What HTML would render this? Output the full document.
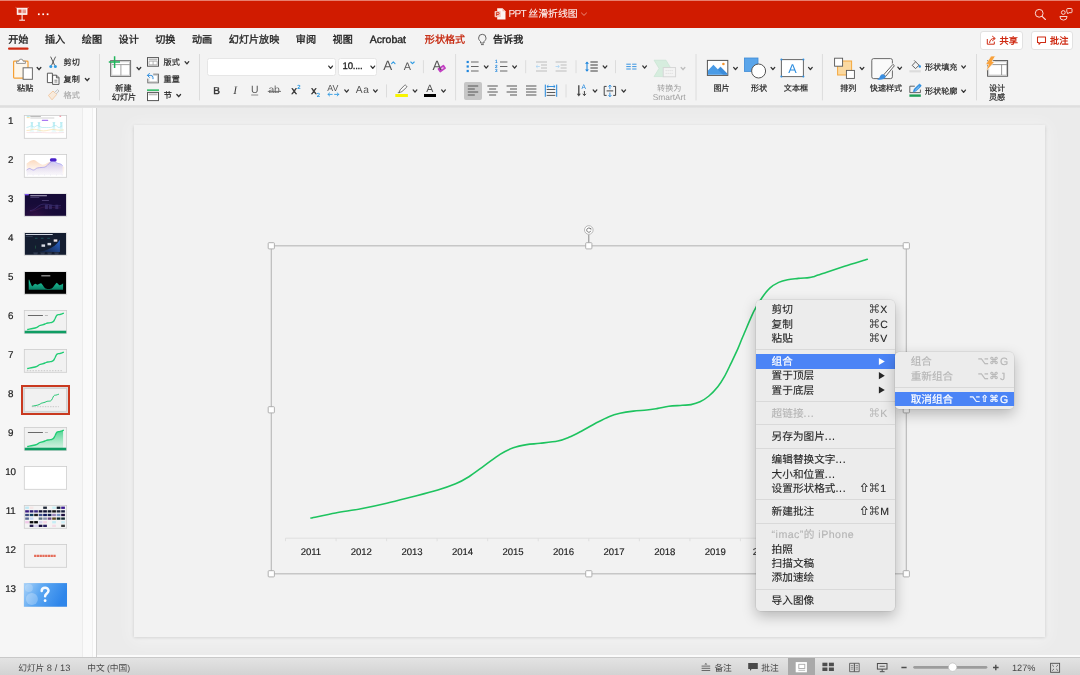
<!DOCTYPE html>
<html lang="zh-CN"><head><meta charset="utf-8"><title>PPT 丝滑折线图</title>
<style>
html,body{margin:0;padding:0;}
html{width:1080px;height:675px;overflow:hidden;background:#ebebeb;}
body{width:1080px;height:675px;overflow:hidden;position:relative;background:#ebebeb;font-family:"Liberation Sans", sans-serif;text-rendering:geometricPrecision;}
.t{position:absolute;white-space:nowrap;font-family:"Liberation Sans", sans-serif;}
.a{position:absolute;}
svg{position:absolute;left:0;top:0;overflow:visible;}
</style></head><body>
<div class="a" style="left:0;top:0;width:1080px;height:675px;overflow:hidden;">
<div class="a" style="left:0;top:0;width:1080px;height:28px;background:#d01b00;"></div>
<div class="a" style="left:0;top:0;width:1080px;height:1px;background:#e77f6f;"></div>
<div class="a" style="left:0;top:28px;width:1080px;height:77px;background:#f3f3f3;"></div>
<div class="a" style="left:0;top:104.5px;width:1080px;height:3px;background:linear-gradient(#e4e4e4,#dedede 50%,#e6e6e6);"></div>
<div class="a" style="left:0;top:107.5px;width:82px;height:550px;background:#f6f6f6;"></div>
<div class="a" style="left:82px;top:107.5px;width:14px;height:550px;background:#fafafa;border-left:1px solid #ececec;box-sizing:border-box;"></div>
<div class="a" style="left:92px;top:107.5px;width:4px;height:550px;background:#fdfdfd;border-left:1px solid #efefef;box-sizing:border-box;"></div>
<div class="a" style="left:96px;top:107.5px;width:1px;height:550px;background:#d0d0d0;"></div>
<div class="a" style="left:97px;top:107.5px;width:983px;height:548px;background:#ebebeb;"></div>
<div class="a" style="left:134px;top:124.5px;width:910.5px;height:512.5px;background:#f2f2f2;box-shadow:0 0.5px 3.5px rgba(0,0,0,0.17),0 2px 16px 3px rgba(255,255,255,0.42);"></div>
<div class="a" style="left:97px;top:655px;width:983px;height:2px;background:#fbfbfb;"></div>
<div class="a" style="left:0;top:657px;width:1080px;height:18px;background:linear-gradient(#e3e3e3,#d3d3d3);border-top:1px solid #c9c9c9;box-sizing:border-box;"></div>
<div class="a" style="left:980.4px;top:31px;width:42.3px;height:18.5px;background:#fff;border:1px solid #e2e2e2;border-radius:3px;box-sizing:border-box;"></div>
<div class="a" style="left:1030.6px;top:31px;width:42.2px;height:18.5px;background:#fff;border:1px solid #e2e2e2;border-radius:3px;box-sizing:border-box;"></div>
<div class="a" style="left:207px;top:58.2px;width:128.6px;height:17.9px;background:#fff;border:1px solid #e6e6e6;border-radius:2.5px;box-sizing:border-box;"></div>
<div class="a" style="left:338.2px;top:58.2px;width:39.3px;height:17.9px;background:#fff;border:1px solid #e6e6e6;border-radius:2.5px;box-sizing:border-box;"></div>
<div class="a" style="left:463.8px;top:81.8px;width:18.4px;height:17.9px;background:#c6c6c6;border-radius:2px;"></div>
<div class="a" style="left:21.1px;top:385.10px;width:48.8px;height:29.60px;background:#dcdcdc;border:2px solid #c9391f;box-sizing:border-box;"></div>
<div class="a" style="left:787.5px;top:658px;width:27.3px;height:17px;background:#a9a9a9;"></div>
<svg width="1080" height="675" viewBox="0 0 1080 675"><g stroke="#fff" fill="none" stroke-width="1"><rect x="17.3" y="8.3" width="9.6" height="6" fill="#fff" fill-opacity="0.85"/><path d="M22.1 14.5V20 M19.2 20.2H25"/><path d="M15.6 7.4L17 8.4 M28.6 7.4L27.2 8.4" stroke-opacity="0.7" stroke-width="0.6"/></g><rect x="18.4" y="9.6" width="3" height="3.2" fill="#d01b00" fill-opacity="0.75"/><path d="M22.6 10.2H26 M22.6 11.4H26 M22.6 12.6H26" stroke="#d01b00" stroke-opacity="0.7" stroke-width="0.6"/>
<rect x="37.949999999999996" y="13.4" width="1.7" height="1.7" fill="#fff"/>
<rect x="42.35" y="13.4" width="1.7" height="1.7" fill="#fff"/>
<rect x="46.75" y="13.4" width="1.7" height="1.7" fill="#fff"/>
<path d="M497.2 8.3h5.3l3 3v8.2h-8.3z" fill="#fff" fill-opacity="0.95"/><path d="M502.5 8.3v3h3z" fill="#f3b5a8"/><rect x="494.6" y="11" width="6.2" height="6.2" rx="0.8" fill="#f6c9c0"/><path d="M496.6 15.9v-3.6h1.5a1.1 1.1 0 0 1 0 2.2h-1.5" stroke="#d01b00" stroke-width="0.8" fill="none"/>
<path d="M581.50 13.00 L584.00 15.40 L586.50 13.00" fill="none" stroke="#ea8b7b" stroke-width="1" stroke-linecap="round" stroke-linejoin="round"/>
<g opacity="0.85"><circle cx="1039.2" cy="13.3" r="3.9" fill="none" stroke="#fff" stroke-width="1"/><path d="M1042.1 16.3L1045.4 19.5" stroke="#fff" stroke-width="1.1" stroke-linecap="round"/></g>
<g fill="none" stroke="#fff" stroke-width="0.95" opacity="0.85"><circle cx="1063.3" cy="12.5" r="1.9"/><path d="M1059.9 16.5h7.2a3.6 3.6 0 0 1 -7.2 0z"/><path d="M1067.6 8.5h3.6a0.8 0.8 0 0 1 0.8 0.8v2.6a0.8 0.8 0 0 1 -0.8 0.8h-2.4l-1 1.1v-1.1h-0.2a0.8 0.8 0 0 1 -0.8-0.8v-2.6a0.8 0.8 0 0 1 0.8-0.8z"/></g>
<rect x="8" y="47.6" width="20.6" height="2.1" rx="1.05" fill="#cf2a12"/>
<g fill="none" stroke="#555" stroke-width="0.9"><path d="M480.6 41.6c-1.6-1.5-2-2.4-2-3.6a3.7 3.7 0 0 1 7.4 0c0 1.2-0.4 2.1-2 3.6v1.4h-3.4z"/><path d="M481 44.6h2.8"/></g>
<g fill="none" stroke="#cf2a12" stroke-width="1" stroke-linejoin="round" stroke-linecap="round"><path d="M987.3 39.4v4.800h7v-2.200"/><path d="M989.6 42.6c0.300-2.800 1.800-4.100 4.600-4.100 M992.500 36.300l2.800 2.200-2.800 2.200"/></g>
<path d="M1037.500 37h8v5.400h-4.800l-1.700 1.900v-1.900h-1.500z" fill="none" stroke="#cf2a12" stroke-width="1.05" stroke-linejoin="round"/>
<path d="M99.5 54V100.4" stroke="#dcdcdc" stroke-width="1"/>
<path d="M199.5 54V100.4" stroke="#dcdcdc" stroke-width="1"/>
<path d="M455.6 54V100.4" stroke="#dcdcdc" stroke-width="1"/>
<path d="M696 54V100.4" stroke="#dcdcdc" stroke-width="1"/>
<path d="M822.4 54V100.4" stroke="#dcdcdc" stroke-width="1"/>
<path d="M976.5 54V100.4" stroke="#dcdcdc" stroke-width="1"/>
<rect x="13.6" y="61.2" width="14.4" height="16.9" rx="0.8" fill="#fdf6ea" stroke="#f5a033" stroke-width="1.2"/><path d="M16.6 63.4v-2.2h2.3a2.1 2.1 0 0 1 4.2 0h2.3v2.2z" fill="#fff" stroke="#8a8a8a" stroke-width="0.9"/><rect x="23.1" y="67.8" width="9.3" height="11.5" fill="#fff" stroke="#6a6a6a" stroke-width="1"/>
<path d="M37.15 67.50 L39.00 69.70 L40.85 67.50" fill="none" stroke="#333" stroke-width="1.3" stroke-linecap="round" stroke-linejoin="round"/>
<g fill="none" stroke="#4a4a4a" stroke-width="0.9" stroke-linecap="round"><path d="M50.8 57L54.6 65.2 M55.4 57L51.6 65.2"/></g><circle cx="50.8" cy="66.5" r="1.5" fill="#2f9be3"/><circle cx="55.4" cy="66.5" r="1.5" fill="#2f9be3"/>
<g fill="#fff" stroke="#4a4a4a" stroke-width="0.9" stroke-linejoin="round"><path d="M47.4 73.2h5v9.4h-5z"/><path d="M52.6 75.2h4l2.4 2.4v6.8h-6.4z"/><path d="M56.4 75.4v2.4h2.4" fill="none"/><path d="M54.4 80.2h3 M54.4 82h3" stroke-width="0.7"/></g>
<path d="M85.35 78.50 L87.20 80.70 L89.05 78.50" fill="none" stroke="#333" stroke-width="1.3" stroke-linecap="round" stroke-linejoin="round"/>
<g opacity="0.55"><path d="M48.4 95.4l4.6-4.4 3.6 3.6-4.6 5.2z" fill="#fde3c8" stroke="#f09a4a" stroke-width="0.8" stroke-linejoin="round"/><path d="M54.6 92.4l3-2.8 1.4 1.4-2.8 3" fill="#eee" stroke="#8a8a8a" stroke-width="0.8"/></g>
<rect x="110.6" y="60.6" width="20" height="15.8" fill="#fff" stroke="#6f6f6f" stroke-width="1"/><rect x="111.7" y="61.7" width="17.8" height="13.6" fill="none" stroke="#c9c9c9" stroke-width="1"/><path d="M112 64.6h18 M120.9 64.6v11" stroke="#9a9a9a" stroke-width="0.9"/><path d="M108.8 62h11.2 M114.6 56.3v11.6" stroke="#21b55c" stroke-width="1.5"/>
<path d="M137.05 67.50 L138.90 69.70 L140.75 67.50" fill="none" stroke="#333" stroke-width="1.3" stroke-linecap="round" stroke-linejoin="round"/>
<rect x="147.5" y="57.6" width="11" height="8.6" fill="#fff" stroke="#555" stroke-width="1"/><rect x="148.6" y="58.7" width="8.8" height="1.6" fill="#bdbdbd"/><path d="M149 61.2h8.2v3.6h-8.2z M153.1 61.2v3.6" fill="none" stroke="#9a9a9a" stroke-width="0.7"/>
<path d="M185.05 61.70 L186.90 63.90 L188.75 61.70" fill="none" stroke="#333" stroke-width="1.3" stroke-linecap="round" stroke-linejoin="round"/>
<rect x="147.8" y="74.2" width="10.6" height="8.6" fill="#fff" stroke="#6a6a6a" stroke-width="1"/><rect x="148.8" y="75.2" width="8.6" height="6.6" fill="none" stroke="#c6c6c6" stroke-width="1"/><rect x="146.6" y="72.6" width="6.6" height="6" fill="#f3f3f3"/><path d="M147.6 75.4h3.2a2.2 2.2 0 0 1 2.2 2.2v1.2 M149.4 73.4l-2 2 2 2" fill="none" stroke="#2f8fe0" stroke-width="1" stroke-linecap="round" stroke-linejoin="round"/>
<rect x="147.5" y="92.4" width="11" height="8.2" fill="#fff" stroke="#555" stroke-width="1"/><rect x="148.6" y="93.5" width="8.8" height="1.8" fill="#bdbdbd"/><rect x="147" y="89.3" width="12" height="1.7" fill="#3dc06f"/>
<path d="M176.85 94.50 L178.70 96.70 L180.55 94.50" fill="none" stroke="#333" stroke-width="1.3" stroke-linecap="round" stroke-linejoin="round"/>
<path d="M328.75 66.10 L330.60 68.30 L332.45 66.10" fill="none" stroke="#333" stroke-width="1.3" stroke-linecap="round" stroke-linejoin="round"/>
<path d="M370.95 66.10 L372.80 68.30 L374.65 66.10" fill="none" stroke="#333" stroke-width="1.3" stroke-linecap="round" stroke-linejoin="round"/>
<path d="M391.6 63.6l1.7-1.7 1.7 1.7" fill="none" stroke="#2f9be3" stroke-width="1.1" stroke-linecap="round" stroke-linejoin="round"/>
<path d="M410.8 62l1.7 1.7 1.7-1.7" fill="none" stroke="#2f9be3" stroke-width="1.1" stroke-linecap="round" stroke-linejoin="round"/>
<path d="M423.4 60.2V73.2" stroke="#dcdcdc" stroke-width="1"/>
<g transform="rotate(-35 441.8 68.6)"><rect x="438" y="66.2" width="7.6" height="4.8" rx="0.8" fill="#c23fc2"/><rect x="441.4" y="67.9" width="2.4" height="1.4" fill="#f0c8f0"/></g>
<path d="M251.2 95h7" stroke="#8a8a8a" stroke-width="1"/>
<path d="M267.8 91.4h13.2" stroke="#555" stroke-width="0.8"/>
<path d="M328 94.4h4.2 M334.6 94.4h4.2 M329.6 92.9l-1.6 1.5 1.6 1.5 M337.2 92.9l1.6 1.5-1.6 1.5" fill="none" stroke="#2f9be3" stroke-width="0.9" stroke-linecap="round" stroke-linejoin="round"/>
<path d="M344.75 89.90 L346.60 92.10 L348.45 89.90" fill="none" stroke="#333" stroke-width="1.3" stroke-linecap="round" stroke-linejoin="round"/>
<path d="M373.55 89.90 L375.40 92.10 L377.25 89.90" fill="none" stroke="#333" stroke-width="1.3" stroke-linecap="round" stroke-linejoin="round"/>
<path d="M386.5 84.4V97.4" stroke="#dcdcdc" stroke-width="1"/>
<path d="M399 92.2l1.2-2.4 4.2-4.4a1 1 0 0 1 1.5 0l0.6 0.6a1 1 0 0 1 0 1.4l-4.6 4.2-1.6 0.6z" fill="#fafafa" stroke="#555" stroke-width="0.8" stroke-linejoin="round"/><path d="M397.4 92.8l2-0.8 0.6 0.6-1 0.6z" fill="#555"/><rect x="395.3" y="94" width="12.6" height="3" fill="#f8f400"/>
<path d="M413.15 89.90 L415.00 92.10 L416.85 89.90" fill="none" stroke="#333" stroke-width="1.3" stroke-linecap="round" stroke-linejoin="round"/>
<rect x="424" y="94" width="12" height="3" fill="#000"/>
<path d="M441.65 89.90 L443.50 92.10 L445.35 89.90" fill="none" stroke="#333" stroke-width="1.3" stroke-linecap="round" stroke-linejoin="round"/>
<rect x="466.6" y="60.9" width="2.2" height="2.2" fill="#1f86dd"/>
<path d="M471 62h7.6" stroke="#9c9c9c" stroke-width="1.6"/>
<rect x="466.6" y="65.4" width="2.2" height="2.2" fill="#1f86dd"/>
<path d="M471 66.5h7.6" stroke="#555" stroke-width="0.9"/>
<rect x="466.6" y="69.9" width="2.2" height="2.2" fill="#1f86dd"/>
<path d="M471 71h7.6" stroke="#9c9c9c" stroke-width="1.6"/>
<path d="M484.35 65.90 L486.20 68.10 L488.05 65.90" fill="none" stroke="#333" stroke-width="1.3" stroke-linecap="round" stroke-linejoin="round"/>
<path d="M500 62h7.4" stroke="#9c9c9c" stroke-width="1.6"/>
<path d="M500 66.5h7.4" stroke="#555" stroke-width="0.9"/>
<path d="M500 71h7.4" stroke="#9c9c9c" stroke-width="1.6"/>
<path d="M512.75 65.90 L514.60 68.10 L516.45 65.90" fill="none" stroke="#333" stroke-width="1.3" stroke-linecap="round" stroke-linejoin="round"/>
<path d="M525.7 60.2V73.2" stroke="#dcdcdc" stroke-width="1"/>
<g stroke="#cfcfcf" stroke-width="1.5"><path d="M536.0 62h11 M541.0 65h6 M541.0 68h6 M536.0 71h11"/></g>
<path d="M539.8000000000001 66.5h-3.6 M537.6 65.1l-1.5 1.4 1.5 1.4" fill="none" stroke="#a9d3f3" stroke-width="0.8"/>
<g stroke="#cfcfcf" stroke-width="1.5"><path d="M555.6 62h11 M560.6 65h6 M560.6 68h6 M555.6 71h11"/></g>
<path d="M555.6 66.5h3.6 M557.8000000000001 65.1l1.5 1.4-1.5 1.4" fill="none" stroke="#a9d3f3" stroke-width="0.8"/>
<path d="M576 60.2V73.2" stroke="#dcdcdc" stroke-width="1"/>
<path d="M587 62.6v8" stroke="#1f86dd" stroke-width="1.1"/><path d="M585 63.8l2-2.4 2 2.4z M585 69.4l2 2.4 2-2.4z" fill="#1f86dd"/>
<path d="M590.4 62h7.4" stroke="#707070" stroke-width="1.4"/>
<path d="M590.4 65h7.4" stroke="#707070" stroke-width="1.4"/>
<path d="M590.4 68h7.4" stroke="#707070" stroke-width="1.4"/>
<path d="M590.4 71h7.4" stroke="#707070" stroke-width="1.4"/>
<path d="M603.15 65.90 L605.00 68.10 L606.85 65.90" fill="none" stroke="#333" stroke-width="1.3" stroke-linecap="round" stroke-linejoin="round"/>
<path d="M615.5 60.2V73.2" stroke="#dcdcdc" stroke-width="1"/>
<path d="M626.3 64.2h4.5 M632.2 64.2h4.3" stroke="#2f8fe0" stroke-width="0.95"/>
<path d="M626.3 66.6h4.5 M632.2 66.6h4.3" stroke="#2f8fe0" stroke-width="0.95"/>
<path d="M626.3 69h4.5 M632.2 69h4.3" stroke="#2f8fe0" stroke-width="0.95"/>
<path d="M642.75 65.90 L644.60 68.10 L646.45 65.90" fill="none" stroke="#333" stroke-width="1.3" stroke-linecap="round" stroke-linejoin="round"/>
<g opacity="0.75"><path d="M654 60.2h12l5 8.2-5 8.2h-12l5-8.2z" fill="#cdebd8" stroke="#b4dcc2" stroke-width="0.6"/><rect x="663.2" y="67.6" width="12.4" height="9.2" fill="#f4f4f4" stroke="#c9c9c9" stroke-width="0.9"/><path d="M665.6 70.6h7.6 M665.6 73.4h7.6" stroke="#d4d4d4" stroke-width="0.9" stroke-dasharray="1.2 0.8"/></g>
<path d="M681.15 67.50 L683.00 69.70 L684.85 67.50" fill="none" stroke="#bdbdbd" stroke-width="1.3" stroke-linecap="round" stroke-linejoin="round"/>
<path d="M467.80 86h10.4" stroke="#7a7a7a" stroke-width="1.5"/>
<path d="M467.80 89h7" stroke="#7a7a7a" stroke-width="1.5"/>
<path d="M467.80 92h10.4" stroke="#7a7a7a" stroke-width="1.5"/>
<path d="M467.80 95h7" stroke="#7a7a7a" stroke-width="1.5"/>
<path d="M487.40 86h10.4" stroke="#8a8a8a" stroke-width="1.5"/>
<path d="M489.10 89h7" stroke="#8a8a8a" stroke-width="1.5"/>
<path d="M487.40 92h10.4" stroke="#8a8a8a" stroke-width="1.5"/>
<path d="M489.10 95h7" stroke="#8a8a8a" stroke-width="1.5"/>
<path d="M506.60 86h10.4" stroke="#8a8a8a" stroke-width="1.5"/>
<path d="M510.00 89h7" stroke="#8a8a8a" stroke-width="1.5"/>
<path d="M506.60 92h10.4" stroke="#8a8a8a" stroke-width="1.5"/>
<path d="M510.00 95h7" stroke="#8a8a8a" stroke-width="1.5"/>
<path d="M526.00 86h10.4" stroke="#8a8a8a" stroke-width="1.5"/>
<path d="M526.00 89h10.4" stroke="#8a8a8a" stroke-width="1.5"/>
<path d="M526.00 92h10.4" stroke="#8a8a8a" stroke-width="1.5"/>
<path d="M526.00 95h10.4" stroke="#8a8a8a" stroke-width="1.5"/>
<path d="M545.3 84.6v12.2 M556.7 84.6v12.2" stroke="#1f86dd" stroke-width="1"/><path d="M547 86.5h8 M548.4 85.2l-1.5 1.3 1.5 1.3 M553.6 85.2l1.5 1.3-1.5 1.3" fill="none" stroke="#1f86dd" stroke-width="0.9" stroke-linejoin="round"/>
<path d="M546.70 89.5h8.6" stroke="#4a4a4a" stroke-width="0.9"/>
<path d="M546.70 92.5h8.6" stroke="#4a4a4a" stroke-width="0.9"/>
<path d="M546.70 95.4h8.6" stroke="#4a4a4a" stroke-width="0.9"/>
<path d="M566 84.4V97.4" stroke="#dcdcdc" stroke-width="1"/>
<path d="M578.8 85.2v9.4" stroke="#444" stroke-width="1.3"/><path d="M576.8 93.8l2 2.8 2-2.8z" fill="#444"/>
<path d="M584.4 91v4.6 M582.8 93.8l1.6 1.8 1.6-1.8" fill="none" stroke="#444" stroke-width="1" stroke-linejoin="round"/>
<path d="M593.15 89.90 L595.00 92.10 L596.85 89.90" fill="none" stroke="#333" stroke-width="1.3" stroke-linecap="round" stroke-linejoin="round"/>
<g fill="none" stroke="#444" stroke-width="1"><path d="M606.6 86.4h-2.4v9h2.4 M613.2 86.4h2.4v9h-2.4"/><path d="M606.6 90.9h6.6"/><path d="M609.9 85.2v4 M608.5 86.6l1.4-1.5 1.4 1.5 M609.9 96.6v-4 M608.5 95.2l1.4 1.5 1.4-1.5" stroke="#1f86dd" stroke-width="0.9"/></g>
<path d="M621.85 89.90 L623.70 92.10 L625.55 89.90" fill="none" stroke="#333" stroke-width="1.3" stroke-linecap="round" stroke-linejoin="round"/>
<rect x="707.4" y="60.4" width="20.4" height="15" fill="#fff" stroke="#555" stroke-width="1"/><path d="M708 74.8v-4.4l5.4-5.6 4.6 4.8 2.6-2.6 6.6 6.6v1.2z" fill="#4a9be6"/><path d="M717.6 69.4l2.8-2.8 6.8 6.8v1.4h-4.2z" fill="#2f7fd0" fill-opacity="0.55"/><circle cx="723.4" cy="64" r="1.3" fill="#f5932c"/>
<path d="M733.65 67.40 L735.50 69.60 L737.35 67.40" fill="none" stroke="#333" stroke-width="1.3" stroke-linecap="round" stroke-linejoin="round"/>
<rect x="744.4" y="58" width="13.6" height="13.4" fill="#5aa5ea" stroke="#3c8ad6" stroke-width="0.8"/><circle cx="758.6" cy="71" r="7" fill="#fff" stroke="#555" stroke-width="1"/>
<path d="M771.05 67.40 L772.90 69.60 L774.75 67.40" fill="none" stroke="#333" stroke-width="1.3" stroke-linecap="round" stroke-linejoin="round"/>
<rect x="781.4" y="59.6" width="22" height="17" fill="#fff" stroke="#666" stroke-width="1"/>
<circle cx="781.4" cy="59.6" r="1" fill="#2f8fe0"/>
<circle cx="803.4" cy="59.6" r="1" fill="#2f8fe0"/>
<circle cx="781.4" cy="76.6" r="1" fill="#2f8fe0"/>
<circle cx="803.4" cy="76.6" r="1" fill="#2f8fe0"/>
<path d="M808.55 67.40 L810.40 69.60 L812.25 67.40" fill="none" stroke="#333" stroke-width="1.3" stroke-linecap="round" stroke-linejoin="round"/>
<rect x="837.6" y="61" width="14" height="14" fill="#fbd9a0" stroke="#f4a83f" stroke-width="1"/><rect x="834.6" y="58.2" width="8" height="8" fill="#fff" stroke="#555" stroke-width="0.9"/><rect x="846.4" y="70.4" width="8" height="8" fill="#fff" stroke="#555" stroke-width="0.9"/>
<path d="M860.15 67.40 L862.00 69.60 L863.85 67.40" fill="none" stroke="#333" stroke-width="1.3" stroke-linecap="round" stroke-linejoin="round"/>
<rect x="871.8" y="58.6" width="20.6" height="20" rx="1.8" fill="#fafafa" stroke="#5a5a5a" stroke-width="0.9"/><path d="M894.6 64.6l-10.400 12" stroke="#f3f3f3" stroke-width="4.600"/><path d="M892.900 64.400l1.500 1.300-8.700 10.600-1.900-1.600z" fill="#fdfdfd" stroke="#4a4a4a" stroke-width="0.85" stroke-linejoin="round"/><path d="M883.700 74.500l2.300 2c-1.300 2.700-5.200 3.900-9 3 2.300-1.100 2.700-2.700 3.500-4.100 0.800-1.100 2.100-1.400 3.200-0.900z" fill="#3c8fe0"/>
<path d="M897.85 67.20 L899.70 69.40 L901.55 67.20" fill="none" stroke="#333" stroke-width="1.3" stroke-linecap="round" stroke-linejoin="round"/>
<g fill="none" stroke="#555" stroke-width="0.9" stroke-linejoin="round"><path d="M912.2 65.4l3.4-3.6 3.4 3.4-3.4 3.4z"/><path d="M915.6 61.8l-1.4-1.4"/></g><path d="M919.8 64.4c0.8 1 1.2 1.7 1.2 2.2a1.2 1.2 0 0 1-2.4 0c0-0.5 0.4-1.2 1.2-2.2z" fill="#2f8fe0"/><rect x="909.4" y="70.2" width="11.4" height="2.2" fill="#dcdcdc"/>
<path d="M961.75 65.90 L963.60 68.10 L965.45 65.90" fill="none" stroke="#333" stroke-width="1.3" stroke-linecap="round" stroke-linejoin="round"/>
<path d="M909.8 86.2h5 M909.8 86.2v6.4h10.6v-3" fill="none" stroke="#555" stroke-width="0.9"/><path d="M913.200 92l0.900-2.900 4.800-4.700a0.900 0.900 0 0 1 1.300 0l0.700 0.700a0.900 0.900 0 0 1 0 1.300l-4.800 4.700z" fill="#2f8fe0" stroke="#2f8fe0" stroke-width="0.5" stroke-linejoin="round"/><path d="M915.200 90.300l4.200-4.100" stroke="#d6e9fa" stroke-width="0.7"/><rect x="909.4" y="94.4" width="11.4" height="2.4" fill="#1e9e56"/>
<path d="M961.75 90.10 L963.60 92.30 L965.45 90.10" fill="none" stroke="#333" stroke-width="1.3" stroke-linecap="round" stroke-linejoin="round"/>
<rect x="987.6" y="60.6" width="20" height="15.6" fill="#fff" stroke="#555" stroke-width="1"/><rect x="988.7" y="61.7" width="17.8" height="13.4" fill="none" stroke="#c9c9c9" stroke-width="1"/><path d="M989 64.6h18 M1001.6 64.6v10.4" stroke="#8a8a8a" stroke-width="0.9"/><path d="M991 56h4.400l-3.300 5.500h2.700l-8.900 10 2.500-6.900h-2.900z" fill="#f9a13a" stroke="#f3f3f3" stroke-width="0.7" stroke-linejoin="round"/>
<rect x="24.299999999999997" y="115.50" width="42.300000000000004" height="22.80" fill="#ffffff" stroke="#cdcdcd" stroke-width="0.8"/>
<defs><linearGradient id="pk" x1="0" y1="0" x2="0" y2="1"><stop offset="0" stop-color="#9fe6f0" stop-opacity="0.75"/><stop offset="1" stop-color="#c9f3f7" stop-opacity="0.25"/></linearGradient></defs><path d="M28.5 132.7c1.6-0.4 2.2-3 2.4-9.600h2c0.200 6.600 0.800 9.200 2.400 9.600z" fill="url(#pk)"/><rect x="30.599999999999998" y="122.1" width="2.6" height="0.9" fill="#a9e6ef" opacity="0.8"/><path d="M35.6 132.7c1.6-0.4 2.2-3 2.4-9.600h2c0.200 6.600 0.800 9.200 2.400 9.600z" fill="url(#pk)"/><rect x="37.7" y="122.1" width="2.6" height="0.9" fill="#a9e6ef" opacity="0.8"/><path d="M50.5 132.7c1.6-0.4 2.2-3 2.4-9.600h2c0.200 6.600 0.800 9.200 2.400 9.600z" fill="url(#pk)"/><rect x="52.6" y="122.1" width="2.6" height="0.9" fill="#a9e6ef" opacity="0.8"/><path d="M57.9 132.7c1.6-0.4 2.2-3 2.4-9.600h2c0.200 6.600 0.800 9.200 2.400 9.600z" fill="url(#pk)"/><rect x="60.0" y="122.1" width="2.6" height="0.9" fill="#a9e6ef" opacity="0.8"/><path d="M26.5 127.5c3-0.600 4-1.600 5-1.600s1.600 1 2.600 1.200 2-1.600 3.600-1.600 2.600 2 4.600 2 6 0 8 0 3-2 5-2 2 2 3.600 2 2-1.600 3.400-1.600" fill="none" stroke="#8fdfea" stroke-width="0.7" opacity="0.75"/><path d="M26.5 130.5c4 0 5-1.200 8-1.200s5 1.600 9 1.600 6-1.400 9-1.400 6 1.200 11.400 0.400" fill="none" stroke="#f6d48a" stroke-width="0.7" opacity="0.75"/><path d="M26.5 132.5c6 0.600 10-0.400 16 0s12 0.600 21.400 0" fill="none" stroke="#f7b9c4" stroke-width="0.6" opacity="0.6"/><rect x="41.8" y="119.8" width="6.4" height="1.2" rx="0.5" fill="#a06af0" opacity="0.9"/><rect x="30.299999999999997" y="116.0" width="10.6" height="0.8" fill="#6a6a6a" opacity="0.55"/><rect x="30.299999999999997" y="117.6" width="24" height="0.8" fill="#8a8a8a" opacity="0.45"/><rect x="26.7" y="115.89999999999999" width="3" height="0.9" fill="#8fdfea" opacity="0.8"/><rect x="26.7" y="117.19999999999999" width="3" height="0.9" fill="#f6d48a" opacity="0.8"/><rect x="59.5" y="115.8" width="1.6" height="0.9" fill="#f0506e" opacity="0.8"/>
<rect x="24.299999999999997" y="154.50" width="42.300000000000004" height="22.80" fill="#ffffff" stroke="#cdcdcd" stroke-width="0.8"/>
<defs><linearGradient id="og" x1="0" y1="0" x2="0" y2="1"><stop offset="0" stop-color="#fbd3b3" stop-opacity="0.85"/><stop offset="1" stop-color="#fdeee2" stop-opacity="0.15"/></linearGradient><linearGradient id="pg" x1="0" y1="0" x2="0" y2="1"><stop offset="0" stop-color="#bdb8f2" stop-opacity="0.9"/><stop offset="1" stop-color="#eeedfc" stop-opacity="0.35"/></linearGradient></defs><path d="M26.599999999999998 163.5c2-1 4-3.400 7-3.400s5.400 4.400 9 4.600 5-2.600 7.400-2.600 4 2.600 6.600 2.600 4-0.600 7.600 2.400v8h-37.600z" fill="url(#og)"/><path d="M26.599999999999998 170.0c1-0.600 2-1.500 3-1.500s2.400 1.600 4 1.500 2.400-1.900 4-2.100 2.600-0.400 4.600-0.500 2.600-0.200 4-1.100 4-4.200 5.400-5.400 2-0.600 3.600 0.800 2.400 1.700 3.600 1.900 2.400 0.400 3.800 2.100v9.400h-36z" fill="url(#pg)"/><path d="M26.599999999999998 170.0c1-0.600 2-1.500 3-1.500s2.400 1.600 4 1.500 2.400-1.900 4-2.100 2.600-0.400 4.600-0.500 2.600-0.200 4-1.100 4-4.200 5.400-5.400 2-0.600 3.600 0.800 2.400 1.700 3.600 1.900 2.400 0.400 3.800 2.100" fill="none" stroke="#8a7fe6" stroke-width="0.6" opacity="0.9"/><rect x="49.9" y="158.2" width="6.7" height="3.400" rx="1.500" fill="#4a22c9"/><path d="M26.9 175.1h36" stroke="#d9d9ee" stroke-width="0.5" stroke-dasharray="0.8 5"/>
<rect x="24.299999999999997" y="193.50" width="42.300000000000004" height="22.80" fill="#160b38" stroke="#e6e6e6" stroke-width="1.0"/>
<defs><radialGradient id="t3" cx="0.25" cy="0.95" r="0.6"><stop offset="0" stop-color="#4a1650" stop-opacity="0.55"/><stop offset="1" stop-color="#160b38" stop-opacity="0"/></radialGradient></defs><rect x="24.799999999999997" y="194.00" width="41.300000000000004" height="21.80" fill="url(#t3)"/><rect x="30.299999999999997" y="195.29999999999998" width="16.6" height="0.9" fill="#e4def6" opacity="0.85"/><rect x="30.299999999999997" y="197.29999999999998" width="9" height="0.6" fill="#8f84bd" opacity="0.6"/><rect x="24.799999999999997" y="194.0" width="4" height="1.3" fill="#7a4ff0"/><rect x="41.9" y="200.29999999999998" width="7" height="0.7" fill="#7a6eaa" opacity="0.7"/><path d="M29.9 210.6c6 0 8-6.500 14-6.500s9 2.500 17 1.500" fill="none" stroke="#4a3a86" stroke-width="0.5"/><path d="M29.9 211.4c7-0.400 9-4 15-4.400s9 1.600 16 0.800" fill="none" stroke="#6a2a5a" stroke-width="0.4" opacity="0.8"/><rect x="44.9" y="204.7" width="3" height="4.400" fill="#3d3272" opacity="0.8"/><rect x="48.9" y="204.7" width="3" height="4.400" fill="#3d3272" opacity="0.7"/><rect x="55.3" y="204.7" width="3" height="4.400" fill="#3d3272" opacity="0.7"/>
<rect x="24.299999999999997" y="232.50" width="42.300000000000004" height="22.80" fill="#141d30" stroke="#e6e6e6" stroke-width="1.0"/>
<defs><linearGradient id="t4" x1="0" y1="0.6" x2="1" y2="0"><stop offset="0" stop-color="#1f4fae" stop-opacity="0.1"/><stop offset="1" stop-color="#2f6fe0" stop-opacity="0.95"/></linearGradient></defs><path d="M32.9 252.1c10-0.400 21-2.600 27-12.400v12.400z" fill="url(#t4)"/><rect x="25.7" y="234.0" width="27" height="1" fill="#e6ebf6" opacity="0.9"/><rect x="25.7" y="236.0" width="7" height="0.5" fill="#6a7896" opacity="0.7"/><rect x="41.5" y="244.4" width="3.600" height="2.400" fill="#d9dbe4"/><rect x="47.5" y="242.9" width="3.600" height="2.400" fill="#d9dbe4"/><rect x="53.7" y="239.4" width="3.600" height="2.300" fill="#ece2e4"/><path d="M34.9 238.29999999999998h2.600 M40.9 238.29999999999998h2.600 M47.3 238.29999999999998h2.600" stroke="#2a8a8a" stroke-width="0.6" opacity="0.8"/><path d="M35.3 248.6v-3" stroke="#2fae5a" stroke-width="0.5" opacity="0.8"/><path d="M33.3 253.0h4.600 M40.3 253.0h4.600 M47.3 253.0h4.600 M54.3 253.0h4.600 M33.9 254.0h3.400 M40.9 254.0h3.400 M47.9 254.0h3.400 M54.9 254.0h3.400" stroke="#6b7690" stroke-width="0.5" opacity="0.8"/>
<rect x="24.299999999999997" y="271.50" width="42.300000000000004" height="22.80" fill="#000000" stroke="#e6e6e6" stroke-width="1.0"/>
<defs><linearGradient id="t5" x1="0" y1="0" x2="0" y2="1"><stop offset="0" stop-color="#22d6a8"/><stop offset="1" stop-color="#0b7f66"/></linearGradient></defs><path d="M28.7 280.3C28.8 280.2 28.9 279.3 29.2 279.7C29.5 280.1 29.8 281.5 30.3 282.6C30.8 283.7 31.5 285.9 32.1 286.2C32.7 286.6 33.2 285.1 33.7 284.7C34.2 284.3 34.6 283.8 35.1 283.7C35.6 283.6 36.1 284.1 36.5 284.3C36.9 284.5 37.1 284.8 37.6 284.7C38.1 284.6 38.9 284.0 39.5 283.7C40.1 283.5 40.6 283.0 41.1 283.2C41.6 283.4 42.1 284.4 42.7 285.1C43.3 285.9 44.0 287.1 44.6 287.7C45.2 288.3 45.8 288.5 46.5 288.7C47.2 288.9 47.9 289.0 48.6 289.0C49.3 289.0 50.0 288.9 50.7 288.7C51.4 288.5 51.9 288.3 52.6 287.7C53.3 287.1 54.0 285.9 54.7 285.1C55.4 284.3 56.0 283.1 56.6 282.9C57.2 282.7 57.6 283.7 58.1 284.1C58.6 284.5 59.1 285.1 59.6 285.2C60.1 285.3 60.5 284.9 60.9 284.7C61.3 284.5 61.7 284.5 62.1 284.2C62.5 284.0 62.9 283.4 63.1 283.2L63.1 289.70000000000005L28.7 289.70000000000005Z" fill="url(#t5)"/><rect x="41.3" y="275.40000000000003" width="9" height="0.9" fill="#d8d8d8"/>
<rect x="24.299999999999997" y="310.50" width="42.300000000000004" height="22.80" fill="#f1f1f1" stroke="#cdcdcd" stroke-width="0.8"/>
<path d="M27.8 329.5C28.6 329.3 31.1 328.9 32.6 328.5C34.1 328.2 35.8 327.8 37.0 327.3C38.2 326.8 38.9 325.9 39.8 325.5C40.7 325.1 41.5 325.1 42.3 324.8C43.2 324.6 44.2 324.3 45.0 324.0C45.9 323.7 46.6 323.2 47.4 323.0C48.2 322.7 49.1 322.7 49.8 322.7C50.6 322.6 51.3 322.6 51.9 322.4C52.6 322.2 53.1 321.9 53.6 321.3C54.1 320.7 54.4 319.9 54.9 319.0C55.4 318.0 55.9 316.5 56.4 315.8C56.9 315.1 57.5 314.9 58.1 314.7C58.6 314.5 58.9 314.7 59.8 314.5C60.6 314.3 62.6 313.6 63.1 313.4C63.7 313.2 63.1 313.4 63.1 313.4" fill="none" stroke="#20cc74" stroke-width="1.35" stroke-linecap="round"/>
<rect x="24.7" y="330.70" width="41.5" height="2.6" fill="#0f9d63"/>
<rect x="27.9" y="315.10" width="15" height="0.9" fill="#333" opacity="0.8"/><rect x="44.9" y="315.30" width="3" height="0.6" fill="#999"/>
<rect x="24.299999999999997" y="349.50" width="42.300000000000004" height="22.80" fill="#f1f1f1" stroke="#cdcdcd" stroke-width="0.8"/>
<path d="M27.8 368.5C28.6 368.3 31.1 367.9 32.6 367.5C34.1 367.2 35.8 366.8 37.0 366.3C38.2 365.8 38.9 364.9 39.8 364.5C40.7 364.1 41.5 364.1 42.3 363.8C43.2 363.6 44.2 363.3 45.0 363.0C45.9 362.7 46.6 362.2 47.4 362.0C48.2 361.7 49.1 361.7 49.8 361.7C50.6 361.6 51.3 361.6 51.9 361.4C52.6 361.2 53.1 360.9 53.6 360.3C54.1 359.7 54.4 358.9 54.9 358.0C55.4 357.0 55.9 355.5 56.4 354.8C56.9 354.1 57.5 353.9 58.1 353.7C58.6 353.5 58.9 353.7 59.8 353.5C60.6 353.3 62.6 352.6 63.1 352.4C63.7 352.2 63.1 352.4 63.1 352.4" fill="none" stroke="#20cc74" stroke-width="1.35" stroke-linecap="round"/>
<path d="M26.9 370.70h36" stroke="#bdbdbd" stroke-width="0.8" stroke-dasharray="1.4 1.4"/>
<rect x="24.299999999999997" y="388.50" width="42.300000000000004" height="22.80" fill="#f1f1f1" stroke="#cdcdcd" stroke-width="0.8"/>
<path d="M32.3 406.2C32.9 406.1 34.7 405.8 35.9 405.5C37.0 405.3 38.2 405.0 39.1 404.6C40.0 404.3 40.6 403.6 41.2 403.3C41.9 403.0 42.5 403.0 43.1 402.8C43.8 402.6 44.5 402.4 45.1 402.2C45.7 402.0 46.3 401.6 46.9 401.4C47.5 401.2 48.1 401.2 48.7 401.2C49.3 401.1 49.8 401.2 50.3 401.0C50.7 400.8 51.2 400.6 51.5 400.2C51.9 399.7 52.1 399.1 52.5 398.4C52.8 397.8 53.2 396.6 53.6 396.1C54.0 395.6 54.4 395.4 54.8 395.2C55.3 395.1 55.5 395.3 56.1 395.1C56.7 394.9 58.2 394.4 58.6 394.3C59.0 394.2 58.6 394.3 58.6 394.3" fill="none" stroke="#1fc56f" stroke-width="1" stroke-linecap="round"/>
<path d="M31.9 406.70h27" stroke="#bdbdbd" stroke-width="0.8" stroke-dasharray="1.4 1.2"/>
<rect x="24.299999999999997" y="427.50" width="42.300000000000004" height="22.80" fill="#f1f1f1" stroke="#cdcdcd" stroke-width="0.8"/>
<defs><linearGradient id="g9" x1="0" y1="0" x2="0" y2="1"><stop offset="0" stop-color="#2fd07f" stop-opacity="0.85"/><stop offset="1" stop-color="#bff0d6" stop-opacity="0.6"/></linearGradient></defs><path d="M27.8 446.5C28.6 446.3 31.1 445.9 32.6 445.5C34.1 445.2 35.8 444.8 37.0 444.3C38.2 443.8 38.9 442.9 39.8 442.5C40.7 442.1 41.5 442.1 42.3 441.8C43.2 441.6 44.2 441.3 45.0 441.0C45.9 440.7 46.6 440.2 47.4 440.0C48.2 439.7 49.1 439.7 49.8 439.7C50.6 439.6 51.3 439.6 51.9 439.4C52.6 439.2 53.1 438.9 53.6 438.3C54.1 437.7 54.4 436.9 54.9 436.0C55.4 435.0 55.9 433.5 56.4 432.8C56.9 432.1 57.5 431.9 58.1 431.7C58.6 431.5 58.9 431.7 59.8 431.5C60.6 431.3 62.6 430.6 63.1 430.4C63.7 430.2 63.1 430.4 63.1 430.4L63.1 448.5L27.8 448.5Z" fill="url(#g9)"/>
<path d="M27.8 446.5C28.6 446.3 31.1 445.9 32.6 445.5C34.1 445.2 35.8 444.8 37.0 444.3C38.2 443.8 38.9 442.9 39.8 442.5C40.7 442.1 41.5 442.1 42.3 441.8C43.2 441.6 44.2 441.3 45.0 441.0C45.9 440.7 46.6 440.2 47.4 440.0C48.2 439.7 49.1 439.7 49.8 439.7C50.6 439.6 51.3 439.6 51.9 439.4C52.6 439.2 53.1 438.9 53.6 438.3C54.1 437.7 54.4 436.9 54.9 436.0C55.4 435.0 55.9 433.5 56.4 432.8C56.9 432.1 57.5 431.9 58.1 431.7C58.6 431.5 58.9 431.7 59.8 431.5C60.6 431.3 62.6 430.6 63.1 430.4C63.7 430.2 63.1 430.4 63.1 430.4" fill="none" stroke="#20cc74" stroke-width="1.35" stroke-linecap="round"/>
<rect x="24.7" y="447.70" width="41.5" height="2.6" fill="#0f9d63"/>
<rect x="27.9" y="432.10" width="15" height="0.9" fill="#333" opacity="0.8"/><rect x="44.9" y="432.30" width="3" height="0.6" fill="#999"/>
<rect x="24.299999999999997" y="466.50" width="42.300000000000004" height="22.80" fill="#ffffff" stroke="#cdcdcd" stroke-width="0.8"/>
<rect x="24.299999999999997" y="505.50" width="42.300000000000004" height="22.80" fill="#f4f4f4" stroke="#cdcdcd" stroke-width="0.8"/>
<rect x="25.20" y="506.60" width="3.7" height="2.3" fill="#bfe8f4"/>
<rect x="29.70" y="506.60" width="3.7" height="2.3" fill="#f6e6e6"/>
<rect x="43.20" y="506.60" width="3.7" height="2.3" fill="#222a3a"/>
<rect x="52.20" y="506.60" width="3.7" height="2.3" fill="#c8f0f4"/>
<rect x="56.70" y="506.60" width="3.7" height="2.3" fill="#0f1a2a"/>
<rect x="61.20" y="506.60" width="3.7" height="2.3" fill="#3a1a90"/>
<rect x="25.20" y="510.22" width="3.7" height="2.3" fill="#3a1a80"/>
<rect x="29.70" y="510.22" width="3.7" height="2.3" fill="#2a1a70"/>
<rect x="34.20" y="510.22" width="3.7" height="2.3" fill="#3a2a80"/>
<rect x="38.70" y="510.22" width="3.7" height="2.3" fill="#101030"/>
<rect x="43.20" y="510.22" width="3.7" height="2.3" fill="#0f1030"/>
<rect x="47.70" y="510.22" width="3.7" height="2.3" fill="#10182a"/>
<rect x="52.20" y="510.22" width="3.7" height="2.3" fill="#151515"/>
<rect x="56.70" y="510.22" width="3.7" height="2.3" fill="#20283a"/>
<rect x="61.20" y="510.22" width="3.7" height="2.3" fill="#1a2040"/>
<rect x="25.20" y="513.84" width="3.7" height="2.3" fill="#3a4a80"/>
<rect x="29.70" y="513.84" width="3.7" height="2.3" fill="#104060"/>
<rect x="34.20" y="513.84" width="3.7" height="2.3" fill="#202020"/>
<rect x="38.70" y="513.84" width="3.7" height="2.3" fill="#40508a"/>
<rect x="43.20" y="513.84" width="3.7" height="2.3" fill="#101a60"/>
<rect x="47.70" y="513.84" width="3.7" height="2.3" fill="#0f2050"/>
<rect x="52.20" y="513.84" width="3.7" height="2.3" fill="#9a86b8"/>
<rect x="56.70" y="513.84" width="3.7" height="2.3" fill="#7a96c4"/>
<rect x="61.20" y="513.84" width="3.7" height="2.3" fill="#201040"/>
<rect x="25.20" y="517.46" width="3.7" height="2.3" fill="#5a6a94"/>
<rect x="29.70" y="517.46" width="3.7" height="2.3" fill="#c4d8f4"/>
<rect x="38.70" y="517.46" width="3.7" height="2.3" fill="#5a7080"/>
<rect x="43.20" y="517.46" width="3.7" height="2.3" fill="#8490a8"/>
<rect x="47.70" y="517.46" width="3.7" height="2.3" fill="#6a4a80"/>
<rect x="52.20" y="517.46" width="3.7" height="2.3" fill="#5a4a20"/>
<rect x="56.70" y="517.46" width="3.7" height="2.3" fill="#102a2a"/>
<rect x="61.20" y="517.46" width="3.7" height="2.3" fill="#1a3038"/>
<rect x="25.20" y="521.08" width="3.7" height="2.3" fill="#f0c8e8"/>
<rect x="29.70" y="521.08" width="3.7" height="2.3" fill="#0a0a0a"/>
<rect x="34.20" y="521.08" width="3.7" height="2.3" fill="#050505"/>
<rect x="38.70" y="521.08" width="3.7" height="2.3" fill="#d8d4ee"/>
<rect x="43.20" y="521.08" width="3.7" height="2.3" fill="#f4d4e4"/>
<rect x="52.20" y="521.08" width="3.7" height="2.3" fill="#c4ecf4"/>
<rect x="61.20" y="521.08" width="3.7" height="2.3" fill="#cdeef6"/>
<rect x="29.70" y="524.70" width="3.7" height="2.3" fill="#2a2050"/>
<rect x="34.20" y="524.70" width="3.7" height="2.3" fill="#d8d0f0"/>
<rect x="38.70" y="524.70" width="3.7" height="2.3" fill="#1a1040"/>
<rect x="43.20" y="524.70" width="3.7" height="2.3" fill="#2a2060"/>
<rect x="52.20" y="524.70" width="3.7" height="2.3" fill="#f6dce6"/>
<rect x="61.20" y="524.70" width="3.7" height="2.3" fill="#3a3a3a"/>
<rect x="24.299999999999997" y="544.50" width="42.300000000000004" height="22.80" fill="#f3f3f3" stroke="#cdcdcd" stroke-width="0.8"/>
<path d="M34.099999999999994 555.80h21.800" stroke="#e0472f" stroke-width="2.2" stroke-dasharray="2.3 0.45" opacity="0.78"/>
<rect x="24.299999999999997" y="583.50" width="42.300000000000004" height="22.80" fill="#3f93ee" stroke="#e6e6e6" stroke-width="1.0"/>
<defs><linearGradient id="sky" x1="0" y1="0" x2="1" y2="0.3"><stop offset="0" stop-color="#a9d2f8"/><stop offset="0.45" stop-color="#5aa6f2"/><stop offset="1" stop-color="#2f86ea"/></linearGradient></defs><rect x="23.9" y="583.10" width="43.1" height="23.6" fill="url(#sky)"/><circle cx="31.9" cy="599.1" r="6" fill="#fff" opacity="0.25"/><circle cx="28.9" cy="588.1" r="4" fill="#fff" opacity="0.2"/>
<path d="M41.7 591.0c0-4.2 6.8-4.2 6.8-0.2 0 2.6-3.4 2.8-3.400 5.400" fill="none" stroke="#fff" stroke-width="2.5" stroke-linecap="round" opacity="0.95"/><circle cx="45.099999999999994" cy="600.7" r="1.4" fill="#fff"/>
<path d="M285.5 538.2H892.1" stroke="#dedede" stroke-width="0.9"/>
<path d="M285.50 538.2v3" stroke="#dedede" stroke-width="0.9"/>
<path d="M336.05 538.2v3" stroke="#dedede" stroke-width="0.9"/>
<path d="M386.60 538.2v3" stroke="#dedede" stroke-width="0.9"/>
<path d="M437.15 538.2v3" stroke="#dedede" stroke-width="0.9"/>
<path d="M487.70 538.2v3" stroke="#dedede" stroke-width="0.9"/>
<path d="M538.25 538.2v3" stroke="#dedede" stroke-width="0.9"/>
<path d="M588.80 538.2v3" stroke="#dedede" stroke-width="0.9"/>
<path d="M639.35 538.2v3" stroke="#dedede" stroke-width="0.9"/>
<path d="M689.90 538.2v3" stroke="#dedede" stroke-width="0.9"/>
<path d="M740.45 538.2v3" stroke="#dedede" stroke-width="0.9"/>
<path d="M791.00 538.2v3" stroke="#dedede" stroke-width="0.9"/>
<path d="M841.55 538.2v3" stroke="#dedede" stroke-width="0.9"/>
<path d="M892.10 538.2v3" stroke="#dedede" stroke-width="0.9"/>
<path d="M311.0 518.0C315.1 517.2 327.3 514.5 335.6 513.0C343.9 511.5 352.5 510.4 361.0 508.8C369.5 507.2 378.3 505.3 386.7 503.3C395.1 501.3 403.0 499.2 411.5 497.0C420.0 494.8 430.4 492.2 437.8 490.0C445.2 487.8 450.4 486.0 455.6 483.8C460.8 481.6 464.1 479.7 468.9 476.7C473.7 473.7 479.2 469.3 484.4 465.6C489.6 461.9 495.2 457.4 500.0 454.4C504.8 451.4 508.8 449.4 513.3 447.8C517.8 446.2 522.2 445.4 526.7 444.6C531.2 443.9 534.8 443.9 540.0 443.3C545.2 442.7 553.0 442.0 557.8 441.0C562.6 440.0 564.8 439.0 568.9 437.3C573.0 435.6 577.8 433.0 582.2 430.7C586.7 428.4 591.2 425.6 595.6 423.3C600.0 421.0 604.8 418.4 608.9 416.7C613.0 415.0 615.9 414.2 620.0 413.3C624.1 412.4 628.8 411.7 633.3 411.1C637.8 410.6 642.6 410.4 646.7 410.0C650.8 409.6 654.1 409.0 657.8 408.4C661.5 407.8 664.8 406.7 668.9 406.2C673.0 405.7 678.5 405.6 682.2 405.3C685.9 405.0 688.0 405.2 691.0 404.6C694.0 404.0 697.0 403.2 700.0 401.8C703.0 400.4 705.9 398.5 708.9 396.0C711.9 393.5 715.2 389.9 717.8 386.7C720.4 383.5 722.2 380.6 724.4 376.7C726.6 372.8 728.8 367.9 731.0 363.3C733.2 358.7 735.8 353.4 737.8 348.9C739.8 344.3 740.4 342.2 743.1 336.0C745.8 329.8 750.7 317.7 753.8 311.4C756.9 305.1 759.1 301.9 761.8 298.0C764.5 294.1 767.0 290.8 769.8 288.2C772.6 285.6 775.7 283.8 778.7 282.4C781.7 281.0 784.3 280.4 787.6 279.7C790.9 279.0 794.8 278.8 798.3 278.4C801.8 278.0 806.2 277.9 808.9 277.6C811.6 277.3 811.3 277.3 814.3 276.4C817.3 275.5 821.7 273.9 826.7 272.2C831.7 270.5 837.7 268.5 844.5 266.3C851.3 264.1 863.5 260.4 867.3 259.2" fill="none" stroke="#1ec35f" stroke-width="1.6" stroke-linecap="round" stroke-linejoin="round"/>
<rect x="271.3" y="245.8" width="635.0" height="327.99999999999994" fill="none" stroke="#bcbcbc" stroke-width="1.2"/>
<path d="M588.8 234.4V245.8" stroke="#808080" stroke-width="0.9"/>
<circle cx="588.8" cy="230" r="4.3" fill="#fff" stroke="#b0b0b0" stroke-width="0.9"/><path d="M590.6999999999999 229.2a2.1 2.1 0 1 0 0.1 1.6" fill="none" stroke="#555" stroke-width="0.8"/><path d="M589.6999999999999 227.8l1.6 0.6-0.2 1.5z" fill="#555"/>
<rect x="268.20" y="242.70" width="6.2" height="6.2" rx="0.8" fill="#fff" stroke="#a8a8a8" stroke-width="0.9"/>
<rect x="585.70" y="242.70" width="6.2" height="6.2" rx="0.8" fill="#fff" stroke="#a8a8a8" stroke-width="0.9"/>
<rect x="903.20" y="242.70" width="6.2" height="6.2" rx="0.8" fill="#fff" stroke="#a8a8a8" stroke-width="0.9"/>
<rect x="268.20" y="406.70" width="6.2" height="6.2" rx="0.8" fill="#fff" stroke="#a8a8a8" stroke-width="0.9"/>
<rect x="903.20" y="406.70" width="6.2" height="6.2" rx="0.8" fill="#fff" stroke="#a8a8a8" stroke-width="0.9"/>
<rect x="268.20" y="570.70" width="6.2" height="6.2" rx="0.8" fill="#fff" stroke="#a8a8a8" stroke-width="0.9"/>
<rect x="585.70" y="570.70" width="6.2" height="6.2" rx="0.8" fill="#fff" stroke="#a8a8a8" stroke-width="0.9"/>
<rect x="903.20" y="570.70" width="6.2" height="6.2" rx="0.8" fill="#fff" stroke="#a8a8a8" stroke-width="0.9"/>
<g transform="translate(0,0.9)">
<path d="M701.6 665.2h8.6 M701.6 667.4h8.6 M701.6 669.6h8.6" stroke="#5a5a5a" stroke-width="0.9"/><path d="M704.4 663.6l1.5-1.6 1.5 1.6z" fill="#5a5a5a"/>
<path d="M748.2 662.2h9.6v6h-6.2l-1.6 1.8v-1.8h-1.8z" fill="#4a4a4a"/>
<rect x="795.7" y="661.2" width="11.2" height="10.2" fill="#fff"/><rect x="798.8" y="663.4" width="6" height="4.2" fill="none" stroke="#a9a9a9" stroke-width="0.9"/><path d="M798.4 669.4h6.800" stroke="#a9a9a9" stroke-width="0.8"/>
<rect x="822.40" y="661.8" width="5" height="3.5" fill="#4e4e4e"/>
<rect x="822.40" y="666.5999999999999" width="5" height="3.5" fill="#4e4e4e"/>
<rect x="828.90" y="661.8" width="5" height="3.5" fill="#4e4e4e"/>
<rect x="828.90" y="666.5999999999999" width="5" height="3.5" fill="#4e4e4e"/>
<g fill="none" stroke="#5c5c5c" stroke-width="0.9"><path d="M849.6 662.4h4.8v8.4h-4.8z M854.4 662.4h4.8v8.4h-4.8z"/><path d="M850.8 664.6h2.4 M850.8 666.4h2.4 M850.8 668.2h2.4 M855.6 664.6h2.4 M855.6 666.4h2.4 M855.6 668.2h2.4" stroke-width="0.6"/></g>
<g fill="none" stroke="#4e4e4e" stroke-width="1"><rect x="877.4" y="662.6" width="9.6" height="5.6"/><path d="M879.6 665.4h5.2" stroke-width="0.8"/><path d="M882.2 668.2v2.4 M879.8 670.8h4.8"/></g>
<path d="M901.4 666.6h5.2" stroke="#4e4e4e" stroke-width="1.5"/>
<path d="M914.6 666.4h71.400" stroke="#9c9c9c" stroke-width="2.7" stroke-linecap="round"/>
<circle cx="952.6" cy="666.3" r="4.2" fill="#fff" stroke="#b5b5b5" stroke-width="0.6"/>
<path d="M993 666.6h5.600 M995.8 663.8v5.600" stroke="#4e4e4e" stroke-width="1.4"/>
<g fill="none" stroke="#4e4e4e" stroke-width="0.9"><rect x="1050.6" y="662.4" width="9" height="9"/><path d="M1052.2 664l1.8 1.8 M1058 664l-1.8 1.8 M1052.2 669.8l1.8-1.8 M1058 669.8l-1.8-1.8" stroke-width="0.8"/></g>
</g></svg>
<div class="a" style="left:0;top:0;width:1080px;height:675px;overflow:hidden;will-change:transform;"><span class="t " style="left:508.6px;top:7.90px;line-height:14px;font-size:10.2px;color:rgba(255,255,255,0.93);font-weight:400;letter-spacing:-0.85px;">PPT</span>
<span class="t " style="left:528.3px;top:8.00px;line-height:14px;font-size:9.9px;color:rgba(255,255,255,0.93);font-weight:400;-webkit-text-stroke:0.1px rgba(255,255,255,0.9);">丝滑折线图</span>
<span class="t " style="left:8.2px;top:34.00px;line-height:14px;font-size:10.1px;color:#1e1e1e;font-weight:400;-webkit-text-stroke:0.34px currentColor;">开始</span>
<span class="t " style="left:45px;top:34.00px;line-height:14px;font-size:10.1px;color:#1e1e1e;font-weight:400;-webkit-text-stroke:0.34px currentColor;">插入</span>
<span class="t " style="left:81.8px;top:34.00px;line-height:14px;font-size:10.1px;color:#1e1e1e;font-weight:400;-webkit-text-stroke:0.34px currentColor;">绘图</span>
<span class="t " style="left:118.6px;top:34.00px;line-height:14px;font-size:10.1px;color:#1e1e1e;font-weight:400;-webkit-text-stroke:0.34px currentColor;">设计</span>
<span class="t " style="left:155.2px;top:34.00px;line-height:14px;font-size:10.1px;color:#1e1e1e;font-weight:400;-webkit-text-stroke:0.34px currentColor;">切换</span>
<span class="t " style="left:192px;top:34.00px;line-height:14px;font-size:10.1px;color:#1e1e1e;font-weight:400;-webkit-text-stroke:0.34px currentColor;">动画</span>
<span class="t " style="left:228.8px;top:34.00px;line-height:14px;font-size:10.1px;color:#1e1e1e;font-weight:400;-webkit-text-stroke:0.34px currentColor;">幻灯片放映</span>
<span class="t " style="left:295.8px;top:34.00px;line-height:14px;font-size:10.1px;color:#1e1e1e;font-weight:400;-webkit-text-stroke:0.34px currentColor;">审阅</span>
<span class="t " style="left:332.6px;top:34.00px;line-height:14px;font-size:10.1px;color:#1e1e1e;font-weight:400;-webkit-text-stroke:0.34px currentColor;">视图</span>
<span class="t " style="left:369.8px;top:32.70px;line-height:14px;font-size:10.5px;color:#262626;font-weight:400;-webkit-text-stroke:0.38px #262626;">Acrobat</span>
<span class="t " style="left:424.8px;top:34.00px;line-height:14px;font-size:10.1px;color:#c8321a;font-weight:700;">形状格式</span>
<span class="t " style="left:493px;top:34.00px;line-height:14px;font-size:10.1px;color:#1e1e1e;font-weight:400;-webkit-text-stroke:0.34px currentColor;">告诉我</span>
<span class="t " style="left:999.6px;top:33.80px;line-height:14px;font-size:9.2px;color:#cf2a12;font-weight:700;">共享</span>
<span class="t " style="left:1050px;top:33.80px;line-height:14px;font-size:9.2px;color:#cf2a12;font-weight:700;">批注</span>
<span class="t " style="left:-74.8px;width:200px;text-align:center;top:82.10px;line-height:14px;font-size:8.1px;color:#262626;font-weight:400;-webkit-text-stroke:0.2px currentColor;">粘贴</span>
<span class="t " style="left:63.6px;top:56.30px;line-height:14px;font-size:8.1px;color:#262626;font-weight:400;-webkit-text-stroke:0.2px currentColor;">剪切</span>
<span class="t " style="left:63.6px;top:73.10px;line-height:14px;font-size:8.1px;color:#262626;font-weight:400;-webkit-text-stroke:0.2px currentColor;">复制</span>
<span class="t " style="left:63.6px;top:89.20px;line-height:14px;font-size:8.1px;color:#ababab;font-weight:400;-webkit-text-stroke:0.2px currentColor;">格式</span>
<span class="t " style="left:23.400000000000006px;width:200px;text-align:center;top:81.70px;line-height:14px;font-size:8.1px;color:#262626;font-weight:400;-webkit-text-stroke:0.2px currentColor;">新建</span>
<span class="t " style="left:24px;width:200px;text-align:center;top:90.90px;line-height:14px;font-size:8.1px;color:#262626;font-weight:400;-webkit-text-stroke:0.2px currentColor;">幻灯片</span>
<span class="t " style="left:163.6px;top:56.30px;line-height:14px;font-size:8.1px;color:#262626;font-weight:400;-webkit-text-stroke:0.2px currentColor;">版式</span>
<span class="t " style="left:163.6px;top:73.10px;line-height:14px;font-size:8.1px;color:#262626;font-weight:400;-webkit-text-stroke:0.2px currentColor;">重置</span>
<span class="t " style="left:163.8px;top:88.90px;line-height:14px;font-size:8.1px;color:#262626;font-weight:400;-webkit-text-stroke:0.2px currentColor;">节</span>
<span class="t " style="left:342.6px;top:60.30px;line-height:14px;font-size:9.6px;color:#222;font-weight:400;letter-spacing:-0.25px;-webkit-text-stroke:0.3px #222;">10....</span>
<span class="t " style="left:383.2px;top:57.60px;line-height:16px;font-size:13.4px;color:#555;font-weight:400;">A</span>
<span class="t " style="left:403.8px;top:59.60px;line-height:14px;font-size:10.8px;color:#555;font-weight:400;">A</span>
<span class="t " style="left:432.6px;top:57.60px;line-height:16px;font-size:13.4px;color:#555;font-weight:400;">A</span>
<span class="t " style="left:213.2px;top:84.70px;line-height:14px;font-size:10.0px;color:#333;font-weight:400;-webkit-text-stroke:0.45px #333;">B</span>
<span class="t " style="left:233.2px;top:83.60px;line-height:14px;font-size:11.6px;color:#444;font-weight:400;font-family:'Liberation Serif',serif;font-style:italic;">I</span>
<span class="t " style="left:251.0px;top:84.30px;line-height:14px;font-size:10.4px;color:#555;font-weight:400;">U</span>
<span class="t " style="left:268.6px;top:83.50px;line-height:14px;font-size:10.4px;color:#666;font-weight:400;letter-spacing:-0.3px;">ab</span>
<span class="t " style="left:291.6px;top:84.00px;line-height:14px;font-size:10.6px;color:#333;font-weight:400;-webkit-text-stroke:0.45px #333;">x</span>
<span class="t " style="left:297.3px;top:83.60px;line-height:8px;font-size:6.0px;color:#2f9be3;font-weight:700;">2</span>
<span class="t " style="left:311.2px;top:84.00px;line-height:14px;font-size:10.6px;color:#333;font-weight:400;-webkit-text-stroke:0.45px #333;">x</span>
<span class="t " style="left:316.7px;top:91.60px;line-height:8px;font-size:6.0px;color:#2f9be3;font-weight:700;">2</span>
<span class="t " style="left:327.2px;top:83.20px;line-height:10px;font-size:8.8px;color:#555;font-weight:400;">AV</span>
<span class="t " style="left:355.8px;top:83.80px;line-height:14px;font-size:10.2px;color:#555;font-weight:400;letter-spacing:0.6px;">Aa</span>
<span class="t " style="left:426.2px;top:81.60px;line-height:14px;font-size:10.6px;color:#555;font-weight:400;">A</span>
<span class="t " style="left:494.9px;top:59.10px;line-height:6px;font-size:4.6px;color:#1f86dd;font-weight:700;">1</span>
<span class="t " style="left:494.9px;top:63.60px;line-height:6px;font-size:4.6px;color:#1f86dd;font-weight:700;">2</span>
<span class="t " style="left:494.9px;top:68.10px;line-height:6px;font-size:4.6px;color:#1f86dd;font-weight:700;">3</span>
<span class="t " style="left:569.2px;width:200px;text-align:center;top:81.50px;line-height:14px;font-size:8.1px;color:#9d9d9d;font-weight:400;">转换为</span>
<span class="t " style="left:569.2px;width:200px;text-align:center;top:90.20px;line-height:14px;font-size:8.4px;color:#9d9d9d;font-weight:400;">SmartArt</span>
<span class="t " style="left:581.6px;top:83.60px;line-height:8px;font-size:6.6px;color:#1f86dd;font-weight:400;">A</span>
<span class="t " style="left:621.5px;width:200px;text-align:center;top:82.30px;line-height:14px;font-size:8.1px;color:#262626;font-weight:400;-webkit-text-stroke:0.2px currentColor;">图片</span>
<span class="t " style="left:659px;width:200px;text-align:center;top:82.30px;line-height:14px;font-size:8.1px;color:#262626;font-weight:400;-webkit-text-stroke:0.2px currentColor;">形状</span>
<span class="t " style="left:692.4px;width:200px;text-align:center;top:60.60px;line-height:16px;font-size:12.6px;color:#2f8fe0;font-weight:400;">A</span>
<span class="t " style="left:696px;width:200px;text-align:center;top:82.30px;line-height:14px;font-size:8.1px;color:#262626;font-weight:400;-webkit-text-stroke:0.2px currentColor;">文本框</span>
<span class="t " style="left:748.3px;width:200px;text-align:center;top:82.30px;line-height:14px;font-size:8.1px;color:#262626;font-weight:400;-webkit-text-stroke:0.2px currentColor;">排列</span>
<span class="t " style="left:786px;width:200px;text-align:center;top:82.10px;line-height:14px;font-size:8.1px;color:#262626;font-weight:400;-webkit-text-stroke:0.2px currentColor;">快速样式</span>
<span class="t " style="left:925px;top:60.80px;line-height:14px;font-size:8.1px;color:#262626;font-weight:400;-webkit-text-stroke:0.2px currentColor;">形状填充</span>
<span class="t " style="left:925px;top:84.90px;line-height:14px;font-size:8.1px;color:#262626;font-weight:400;-webkit-text-stroke:0.2px currentColor;">形状轮廓</span>
<span class="t " style="left:897px;width:200px;text-align:center;top:81.90px;line-height:14px;font-size:8.1px;color:#262626;font-weight:400;-webkit-text-stroke:0.2px currentColor;">设计</span>
<span class="t " style="left:897px;width:200px;text-align:center;top:90.90px;line-height:14px;font-size:8.1px;color:#262626;font-weight:400;-webkit-text-stroke:0.2px currentColor;">灵感</span>
<span class="t " style="left:-89.4px;width:200px;text-align:center;top:115.30px;line-height:14px;font-size:9.8px;color:#222;font-weight:400;letter-spacing:-0.2px;-webkit-text-stroke:0.2px #222;">1</span>
<span class="t " style="left:-89.4px;width:200px;text-align:center;top:154.30px;line-height:14px;font-size:9.8px;color:#222;font-weight:400;letter-spacing:-0.2px;-webkit-text-stroke:0.2px #222;">2</span>
<span class="t " style="left:-89.4px;width:200px;text-align:center;top:193.30px;line-height:14px;font-size:9.8px;color:#222;font-weight:400;letter-spacing:-0.2px;-webkit-text-stroke:0.2px #222;">3</span>
<span class="t " style="left:-89.4px;width:200px;text-align:center;top:232.30px;line-height:14px;font-size:9.8px;color:#222;font-weight:400;letter-spacing:-0.2px;-webkit-text-stroke:0.2px #222;">4</span>
<span class="t " style="left:-89.4px;width:200px;text-align:center;top:271.30px;line-height:14px;font-size:9.8px;color:#222;font-weight:400;letter-spacing:-0.2px;-webkit-text-stroke:0.2px #222;">5</span>
<span class="t " style="left:-89.4px;width:200px;text-align:center;top:310.30px;line-height:14px;font-size:9.8px;color:#222;font-weight:400;letter-spacing:-0.2px;-webkit-text-stroke:0.2px #222;">6</span>
<span class="t " style="left:-89.4px;width:200px;text-align:center;top:349.30px;line-height:14px;font-size:9.8px;color:#222;font-weight:400;letter-spacing:-0.2px;-webkit-text-stroke:0.2px #222;">7</span>
<span class="t " style="left:-89.4px;width:200px;text-align:center;top:388.30px;line-height:14px;font-size:9.8px;color:#222;font-weight:400;letter-spacing:-0.2px;-webkit-text-stroke:0.2px #222;">8</span>
<span class="t " style="left:-89.4px;width:200px;text-align:center;top:427.30px;line-height:14px;font-size:9.8px;color:#222;font-weight:400;letter-spacing:-0.2px;-webkit-text-stroke:0.2px #222;">9</span>
<span class="t " style="left:-89.4px;width:200px;text-align:center;top:466.30px;line-height:14px;font-size:9.8px;color:#222;font-weight:400;letter-spacing:-0.2px;-webkit-text-stroke:0.2px #222;">10</span>
<span class="t " style="left:-89.4px;width:200px;text-align:center;top:505.30px;line-height:14px;font-size:9.8px;color:#222;font-weight:400;letter-spacing:-0.2px;-webkit-text-stroke:0.2px #222;">11</span>
<span class="t " style="left:-89.4px;width:200px;text-align:center;top:544.30px;line-height:14px;font-size:9.8px;color:#222;font-weight:400;letter-spacing:-0.2px;-webkit-text-stroke:0.2px #222;">12</span>
<span class="t " style="left:-89.4px;width:200px;text-align:center;top:583.30px;line-height:14px;font-size:9.8px;color:#222;font-weight:400;letter-spacing:-0.2px;-webkit-text-stroke:0.2px #222;">13</span>
<span class="t " style="left:210.8px;width:200px;text-align:center;top:545.60px;line-height:14px;font-size:9.6px;color:#1e1e1e;font-weight:400;letter-spacing:-0.08px;-webkit-text-stroke:0.15px #1e1e1e;">2011</span>
<span class="t " style="left:261.35px;width:200px;text-align:center;top:545.60px;line-height:14px;font-size:9.6px;color:#1e1e1e;font-weight:400;letter-spacing:-0.08px;-webkit-text-stroke:0.15px #1e1e1e;">2012</span>
<span class="t " style="left:311.9px;width:200px;text-align:center;top:545.60px;line-height:14px;font-size:9.6px;color:#1e1e1e;font-weight:400;letter-spacing:-0.08px;-webkit-text-stroke:0.15px #1e1e1e;">2013</span>
<span class="t " style="left:362.45px;width:200px;text-align:center;top:545.60px;line-height:14px;font-size:9.6px;color:#1e1e1e;font-weight:400;letter-spacing:-0.08px;-webkit-text-stroke:0.15px #1e1e1e;">2014</span>
<span class="t " style="left:413.0px;width:200px;text-align:center;top:545.60px;line-height:14px;font-size:9.6px;color:#1e1e1e;font-weight:400;letter-spacing:-0.08px;-webkit-text-stroke:0.15px #1e1e1e;">2015</span>
<span class="t " style="left:463.54999999999995px;width:200px;text-align:center;top:545.60px;line-height:14px;font-size:9.6px;color:#1e1e1e;font-weight:400;letter-spacing:-0.08px;-webkit-text-stroke:0.15px #1e1e1e;">2016</span>
<span class="t " style="left:514.0999999999999px;width:200px;text-align:center;top:545.60px;line-height:14px;font-size:9.6px;color:#1e1e1e;font-weight:400;letter-spacing:-0.08px;-webkit-text-stroke:0.15px #1e1e1e;">2017</span>
<span class="t " style="left:564.65px;width:200px;text-align:center;top:545.60px;line-height:14px;font-size:9.6px;color:#1e1e1e;font-weight:400;letter-spacing:-0.08px;-webkit-text-stroke:0.15px #1e1e1e;">2018</span>
<span class="t " style="left:615.2px;width:200px;text-align:center;top:545.60px;line-height:14px;font-size:9.6px;color:#1e1e1e;font-weight:400;letter-spacing:-0.08px;-webkit-text-stroke:0.15px #1e1e1e;">2019</span>
<span class="t " style="left:663.35px;width:200px;text-align:center;top:545.60px;line-height:14px;font-size:9.6px;color:#1e1e1e;font-weight:400;letter-spacing:-0.08px;-webkit-text-stroke:0.15px #1e1e1e;">2020</span>
<span class="t " style="left:716.3px;width:200px;text-align:center;top:545.60px;line-height:14px;font-size:9.6px;color:#1e1e1e;font-weight:400;letter-spacing:-0.08px;-webkit-text-stroke:0.15px #1e1e1e;">2021</span>
<span class="t " style="left:766.8499999999999px;width:200px;text-align:center;top:545.60px;line-height:14px;font-size:9.6px;color:#1e1e1e;font-weight:400;letter-spacing:-0.08px;-webkit-text-stroke:0.15px #1e1e1e;">2022</span>
<span class="t " style="left:18.2px;top:660.90px;line-height:14px;font-size:8.7px;color:#474747;font-weight:400;">幻灯片 <span style="font-size:9.3px;letter-spacing:0.1px">8 / 13</span></span>
<span class="t " style="left:87.2px;top:660.90px;line-height:14px;font-size:8.7px;color:#474747;font-weight:400;">中文 (中国)</span>
<span class="t " style="left:714.4px;top:660.90px;line-height:14px;font-size:8.7px;color:#474747;font-weight:400;">备注</span>
<span class="t " style="left:761.2px;top:660.90px;line-height:14px;font-size:8.7px;color:#474747;font-weight:400;">批注</span>
<span class="t " style="left:1012.0px;top:660.80px;line-height:14px;font-size:9.2px;color:#474747;font-weight:400;">127%</span></div>
<div class="a" style="left:755.6px;top:299.6px;width:139.2px;height:311.25px;background:#ececec;border-radius:4.5px;box-shadow:0 0 0 0.5px rgba(0,0,0,0.11),0 5px 14px rgba(0,0,0,0.25);"></div>
<div class="a" style="left:755.6px;top:349.35px;width:139.2px;height:1px;background:#d9d9d9;"></div>
<div class="a" style="left:755.6px;top:354.35px;width:139.2px;height:14.25px;background:#4b84f6;"></div>
<div class="a" style="left:755.6px;top:401.10px;width:139.2px;height:1px;background:#d9d9d9;"></div>
<div class="a" style="left:755.6px;top:424.35px;width:139.2px;height:1px;background:#d9d9d9;"></div>
<div class="a" style="left:755.6px;top:447.60px;width:139.2px;height:1px;background:#d9d9d9;"></div>
<div class="a" style="left:755.6px;top:499.35px;width:139.2px;height:1px;background:#d9d9d9;"></div>
<div class="a" style="left:755.6px;top:522.60px;width:139.2px;height:1px;background:#d9d9d9;"></div>
<div class="a" style="left:755.6px;top:588.60px;width:139.2px;height:1px;background:#d9d9d9;"></div>
<div class="a" style="left:894.7px;top:351.7px;width:119.7px;height:57.75px;background:#ececec;border-radius:4.5px;box-shadow:0 0 0 0.5px rgba(0,0,0,0.11),0 5px 14px rgba(0,0,0,0.25);"></div>
<div class="a" style="left:894.7px;top:387.20px;width:119.7px;height:1px;background:#d9d9d9;"></div>
<div class="a" style="left:894.7px;top:392.20px;width:119.7px;height:14.25px;background:#4b84f6;"></div>
<svg width="1080" height="675" viewBox="0 0 1080 675"><path d="M878.9 357.88L884.8 361.48L878.9 365.08z" fill="#ffffff"/>
<path d="M878.9 372.12L884.8 375.73L878.9 379.33z" fill="#262626"/>
<path d="M878.9 386.38L884.8 389.98L878.9 393.58z" fill="#262626"/></svg>
<div class="a" style="left:0;top:0;width:1080px;height:675px;overflow:hidden;will-change:transform;"><span class="t " style="left:771.6px;top:303.38px;line-height:14px;font-size:10.65px;color:#262626;font-weight:400;-webkit-text-stroke:0.12px currentColor;">剪切</span>
<span class="t " style="left:679.6px;width:200px;text-align:right;top:303.38px;line-height:14px;font-size:9.5px;color:#262626;font-weight:400;letter-spacing:0.6px;-webkit-text-stroke:0.25px currentColor;">⌘</span>
<span class="t " style="left:880.2px;top:303.38px;line-height:14px;font-size:10.5px;color:#262626;font-weight:400;-webkit-text-stroke:0.12px currentColor;">X</span>
<span class="t " style="left:771.6px;top:317.62px;line-height:14px;font-size:10.65px;color:#262626;font-weight:400;-webkit-text-stroke:0.12px currentColor;">复制</span>
<span class="t " style="left:679.6px;width:200px;text-align:right;top:317.62px;line-height:14px;font-size:9.5px;color:#262626;font-weight:400;letter-spacing:0.6px;-webkit-text-stroke:0.25px currentColor;">⌘</span>
<span class="t " style="left:880.2px;top:317.62px;line-height:14px;font-size:10.5px;color:#262626;font-weight:400;-webkit-text-stroke:0.12px currentColor;">C</span>
<span class="t " style="left:771.6px;top:331.88px;line-height:14px;font-size:10.65px;color:#262626;font-weight:400;-webkit-text-stroke:0.12px currentColor;">粘贴</span>
<span class="t " style="left:679.6px;width:200px;text-align:right;top:331.88px;line-height:14px;font-size:9.5px;color:#262626;font-weight:400;letter-spacing:0.6px;-webkit-text-stroke:0.25px currentColor;">⌘</span>
<span class="t " style="left:880.2px;top:331.88px;line-height:14px;font-size:10.5px;color:#262626;font-weight:400;-webkit-text-stroke:0.12px currentColor;">V</span>
<span class="t " style="left:771.6px;top:355.12px;line-height:14px;font-size:10.65px;color:#ffffff;font-weight:400;-webkit-text-stroke:0.2px currentColor;">组合</span>
<span class="t " style="left:771.6px;top:369.38px;line-height:14px;font-size:10.65px;color:#262626;font-weight:400;-webkit-text-stroke:0.12px currentColor;">置于顶层</span>
<span class="t " style="left:771.6px;top:383.62px;line-height:14px;font-size:10.65px;color:#262626;font-weight:400;-webkit-text-stroke:0.12px currentColor;">置于底层</span>
<span class="t " style="left:771.6px;top:406.88px;line-height:14px;font-size:10.65px;color:#b4b4b4;font-weight:400;-webkit-text-stroke:0.12px currentColor;">超链接<span style="letter-spacing:0.7px">...</span></span>
<span class="t " style="left:679.6px;width:200px;text-align:right;top:406.88px;line-height:14px;font-size:9.5px;color:#b4b4b4;font-weight:400;letter-spacing:0.6px;-webkit-text-stroke:0.25px currentColor;">⌘</span>
<span class="t " style="left:880.2px;top:406.88px;line-height:14px;font-size:10.5px;color:#b4b4b4;font-weight:400;-webkit-text-stroke:0.12px currentColor;">K</span>
<span class="t " style="left:771.6px;top:430.12px;line-height:14px;font-size:10.65px;color:#262626;font-weight:400;-webkit-text-stroke:0.12px currentColor;">另存为图片<span style="letter-spacing:0.7px">...</span></span>
<span class="t " style="left:771.6px;top:453.38px;line-height:14px;font-size:10.65px;color:#262626;font-weight:400;-webkit-text-stroke:0.12px currentColor;">编辑替换文字<span style="letter-spacing:0.7px">...</span></span>
<span class="t " style="left:771.6px;top:467.62px;line-height:14px;font-size:10.65px;color:#262626;font-weight:400;-webkit-text-stroke:0.12px currentColor;">大小和位置<span style="letter-spacing:0.7px">...</span></span>
<span class="t " style="left:771.6px;top:481.88px;line-height:14px;font-size:10.65px;color:#262626;font-weight:400;-webkit-text-stroke:0.12px currentColor;">设置形状格式<span style="letter-spacing:0.7px">...</span></span>
<span class="t " style="left:679.6px;width:200px;text-align:right;top:481.88px;line-height:14px;font-size:9.5px;color:#262626;font-weight:400;letter-spacing:0.6px;-webkit-text-stroke:0.25px currentColor;">⇧⌘</span>
<span class="t " style="left:880.2px;top:481.88px;line-height:14px;font-size:10.5px;color:#262626;font-weight:400;-webkit-text-stroke:0.12px currentColor;">1</span>
<span class="t " style="left:771.6px;top:505.12px;line-height:14px;font-size:10.65px;color:#262626;font-weight:400;-webkit-text-stroke:0.12px currentColor;">新建批注</span>
<span class="t " style="left:679.6px;width:200px;text-align:right;top:505.12px;line-height:14px;font-size:9.5px;color:#262626;font-weight:400;letter-spacing:0.6px;-webkit-text-stroke:0.25px currentColor;">⇧⌘</span>
<span class="t " style="left:880.2px;top:505.12px;line-height:14px;font-size:10.5px;color:#262626;font-weight:400;-webkit-text-stroke:0.12px currentColor;">M</span>
<span class="t " style="left:771.6px;top:528.38px;line-height:14px;font-size:10.65px;color:#b4b4b4;font-weight:400;-webkit-text-stroke:0.12px currentColor;letter-spacing:0.45px;">“imac”的 iPhone</span>
<span class="t " style="left:771.6px;top:542.62px;line-height:14px;font-size:10.65px;color:#262626;font-weight:400;-webkit-text-stroke:0.12px currentColor;">拍照</span>
<span class="t " style="left:771.6px;top:556.88px;line-height:14px;font-size:10.65px;color:#262626;font-weight:400;-webkit-text-stroke:0.12px currentColor;">扫描文稿</span>
<span class="t " style="left:771.6px;top:571.12px;line-height:14px;font-size:10.65px;color:#262626;font-weight:400;-webkit-text-stroke:0.12px currentColor;">添加速绘</span>
<span class="t " style="left:771.6px;top:594.38px;line-height:14px;font-size:10.65px;color:#262626;font-weight:400;-webkit-text-stroke:0.12px currentColor;">导入图像</span>
<span class="t " style="left:910.7px;top:355.47px;line-height:14px;font-size:10.65px;color:#b4b4b4;font-weight:400;-webkit-text-stroke:0.12px currentColor;">组合</span>
<span class="t " style="left:799.4px;width:200px;text-align:right;top:355.47px;line-height:14px;font-size:9.5px;color:#b4b4b4;font-weight:400;letter-spacing:0.6px;-webkit-text-stroke:0.25px currentColor;">⌥⌘</span>
<span class="t " style="left:1000.0px;top:355.47px;line-height:14px;font-size:10.5px;color:#b4b4b4;font-weight:400;-webkit-text-stroke:0.12px currentColor;">G</span>
<span class="t " style="left:910.7px;top:369.72px;line-height:14px;font-size:10.65px;color:#b4b4b4;font-weight:400;-webkit-text-stroke:0.12px currentColor;">重新组合</span>
<span class="t " style="left:799.4px;width:200px;text-align:right;top:369.72px;line-height:14px;font-size:9.5px;color:#b4b4b4;font-weight:400;letter-spacing:0.6px;-webkit-text-stroke:0.25px currentColor;">⌥⌘</span>
<span class="t " style="left:1000.0px;top:369.72px;line-height:14px;font-size:10.5px;color:#b4b4b4;font-weight:400;-webkit-text-stroke:0.12px currentColor;">J</span>
<span class="t " style="left:910.7px;top:392.97px;line-height:14px;font-size:10.65px;color:#ffffff;font-weight:400;-webkit-text-stroke:0.2px currentColor;">取消组合</span>
<span class="t " style="left:799.4px;width:200px;text-align:right;top:392.97px;line-height:14px;font-size:9.5px;color:#ffffff;font-weight:400;letter-spacing:0.6px;-webkit-text-stroke:0.25px currentColor;-webkit-text-stroke:0.2px currentColor;">⌥⇧⌘</span>
<span class="t " style="left:1000.0px;top:392.97px;line-height:14px;font-size:10.5px;color:#ffffff;font-weight:400;-webkit-text-stroke:0.12px currentColor;-webkit-text-stroke:0.2px currentColor;">G</span></div>
</div>
</body></html>
